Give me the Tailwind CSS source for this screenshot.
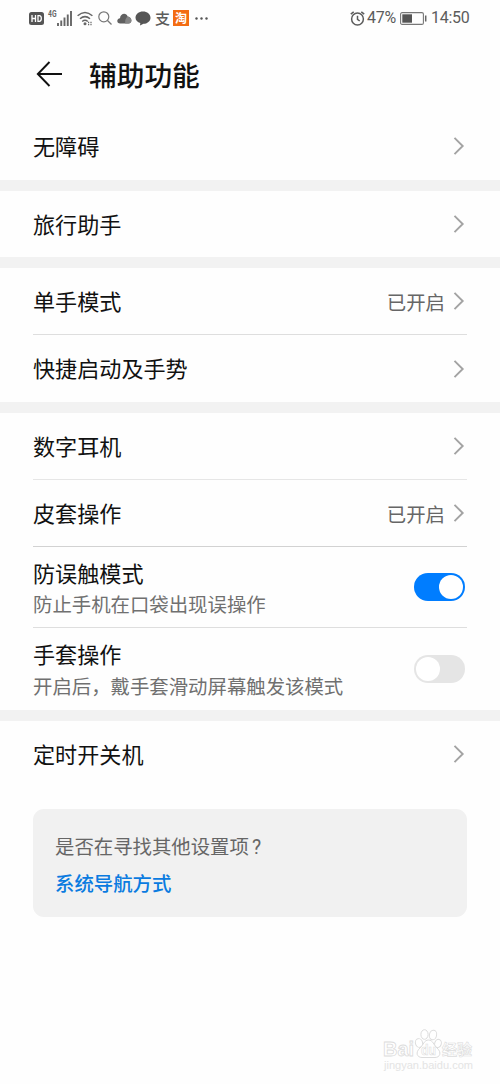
<!DOCTYPE html>
<html lang="zh-CN">
<head>
<meta charset="utf-8">
<title>辅助功能</title>
<script src="https://cdn.jsdelivr.net/npm/@tailwindcss/browser@4"></script>
</head>
<body class="w-[500px] h-[1084px] overflow-hidden bg-[#fefefe] text-[#111] font-['Noto_Sans_CJK_SC',sans-serif] flex flex-col">
<svg class="hidden"><symbol id="chev" viewBox="0 0 12 20"><path d="M1.500 1.800 9.700 10l-8.200 8.200" fill="none" stroke="#a3a3a3" stroke-width="1.900"/></symbol></svg>

<header class="h-9 shrink-0 flex items-center justify-between pl-[29px] pr-[30px] text-[#5c5c5c]">
  <div class="flex items-center">
    <svg class="w-[15px] h-[13px]" viewBox="0 0 15 13"><rect width="15" height="13" rx="2.500" fill="#555"/><path d="M3 3v7M6.500 3v7M3 6.500h3.500M9 3.700v5.600h1.300q2 0 2-2.800t-2-2.800z" fill="none" stroke="#fff" stroke-width="1.300"/></svg>
    <svg class="ml-[4px] mb-[9px] w-[9px] h-[9px] overflow-visible" viewBox="0 0 9 9"><text x="0" y="8" font-family="Roboto, sans-serif" font-size="9" font-weight="700" textLength="8.500" lengthAdjust="spacingAndGlyphs" fill="#666">4G</text></svg>
    <svg class="w-[15px] h-[15px]" viewBox="0 0 15 15"><path d="M1 12v3M4.250 9.500V15M7.500 6.500V15M10.750 3.500V15M14 0v15" stroke="#666" stroke-width="1.900"/></svg>
    <svg class="ml-[5px] w-4 h-[15px]" viewBox="0 0 16 15" fill="none" stroke="#666" stroke-width="1.500"><path d="M.6 4.800q7.400-6.600 14.800 0M3 7.800q5-4.400 10 0M5.200 10.500q2.800-2.400 5.600 0"/><circle cx="8" cy="12.800" r="1.500" fill="#666" stroke="none"/><path d="M11.600 10.800v3.500M14 10.800v3.500" stroke-width="1.200" stroke-dasharray="1.500 .6"/></svg>
    <svg class="ml-[5px] w-[14px] h-[14px]" viewBox="0 0 14 14" fill="none" stroke="#777" stroke-width="1.200"><circle cx="5.800" cy="5.800" r="5"/><path d="m9.500 9.500 4 4"/></svg>
    <svg class="ml-[5px] w-[15px] h-[11px]" viewBox="0 0 15 11"><path d="M3.200 10.500C-.8 10.500-.5 5.500 3 5.300 3.200.2 9.500-.8 10.600 3.500c4.800.5 5 7 .8 7z" fill="#606060"/><path d="M8.200 10.500c-.5-3.500 1-6.500 2.600-7 4.600.5 4.800 7 .6 7z" fill="#858585"/></svg>
    <svg class="ml-[3px] w-4 h-[15px]" viewBox="0 0 16 15"><path d="M8 .5c4.200 0 7.500 2.700 7.500 6.200S12.200 12.800 8.500 12.800L5 14.600l.3-2.500C2.500 11.300.5 9.300.5 6.700.5 3.200 3.800.5 8 .5z" fill="#555"/></svg>
    <span class="ml-[4px] mb-[2px] w-[15px] text-[15px] leading-[15px] font-medium">支</span>
    <span class="ml-[3px] w-4 h-4 bg-[#f36c13] text-white text-[12px] leading-[15px] font-bold text-center">淘</span>
    <svg class="ml-[6px] w-[13px] h-[3px]" viewBox="0 0 13 3" fill="#555"><circle cx="1.500" cy="1.500" r="1.200"/><circle cx="6.500" cy="1.500" r="1.200"/><circle cx="11.500" cy="1.500" r="1.200"/></svg>
  </div>
  <div class="flex items-center font-['Roboto',sans-serif] text-[16px] leading-5">
    <svg class="w-[15px] h-[15px]" viewBox="0 0 15 15" fill="none" stroke="#5c5c5c" stroke-width="1.500"><circle cx="7.500" cy="8" r="5.900"/><path d="M7.500 4.800v3.500l2.200 1.700M.8 3.200 3.700.8M14.200 3.200 11.300.8"/></svg>
    <span class="ml-[2px] w-[29px] tracking-[-0.2px]">47%</span>
    <svg class="ml-[4px] w-[27px] h-[13px]" viewBox="0 0 27 13"><rect x=".6" y=".6" width="22.800" height="11.800" rx="1.500" fill="none" stroke="#777" stroke-width="1.100"/><rect x="2.300" y="2.300" width="9.700" height="8.400" fill="#555"/><path d="M25.700 3.500v6" stroke="#666" stroke-width="1.500"/></svg>
    <span class="ml-[4px] w-[39px] tracking-[-0.3px]">14:50</span>
  </div>
</header>

<div class="h-[75px] mb-[2px] shrink-0 flex items-center pl-9">
  <svg class="w-[27px] h-[26px]" viewBox="0 0 27 26" fill="none" stroke="#111" stroke-width="1.900"><path d="M26 13H2M13.500 1 1.800 13l11.700 12"/></svg>
  <h1 class="ml-[26px] text-[27.700px] leading-10 font-medium">辅助功能</h1>
</div>

<main class="flex flex-col shrink-0 text-[22.100px] leading-8">
  <div class="h-[67px] px-[33px] flex items-center justify-between"><span class="pb-[3px]">无障碍</span><svg class="w-3 h-5 mr-[2px] mb-[2px]"><use href="#chev"/></svg></div>
  <div class="h-[11px] bg-[#f2f2f2]"></div>
  <div class="h-[66px] px-[33px] flex items-center justify-between"><span class="pb-[3px]">旅行助手</span><svg class="w-3 h-5 mr-[2px]"><use href="#chev"/></svg></div>
  <div class="h-[11px] bg-[#f2f2f2]"></div>
  <section class="px-[33px]">
    <div class="h-[67px] border-b border-[#dedede] flex items-center justify-between"><span class="pb-[2px]">单手模式</span><div class="flex items-center gap-2 mr-[2px]"><span class="pt-[2px] text-[19.400px] text-[#666]">已开启</span><svg class="w-3 h-5"><use href="#chev"/></svg></div></div>
    <div class="h-[67px] flex items-center justify-between"><span class="pb-[3px]">快捷启动及手势</span><svg class="w-3 h-5 mr-[2px]"><use href="#chev"/></svg></div>
  </section>
  <div class="h-[11px] bg-[#f2f2f2]"></div>
  <section class="px-[33px]">
    <div class="h-[67px] border-b border-[#e6e6e6] flex items-center justify-between"><span class="pb-[2px]">数字耳机</span><svg class="w-3 h-5 mr-[2px]"><use href="#chev"/></svg></div>
    <div class="h-[67px] border-b border-[#d2d2d2] flex items-center justify-between"><span class="pb-[2px]">皮套操作</span><div class="flex items-center gap-2 mr-[2px]"><span class="pt-[2px] text-[19.400px] text-[#666]">已开启</span><svg class="w-3 h-5"><use href="#chev"/></svg></div></div>
    <div class="h-[81px] border-b border-[#dedede] flex items-center justify-between">
      <div class="flex flex-col"><span class="leading-8">防误触模式</span><span class="pt-px text-[19.400px] leading-[30px] text-[#707070]">防止手机在口袋出现误操作</span></div>
      <div class="w-[51px] h-7 mr-[2px] p-[2px] rounded-full bg-[#007dff] flex justify-end"><div class="w-6 h-6 rounded-full bg-white"></div></div>
    </div>
    <div class="h-[82px] flex items-center justify-between">
      <div class="flex flex-col"><span class="h-8 leading-[30px]">手套操作</span><span class="pt-px text-[19.400px] leading-[30px] text-[#707070]">开启后，戴手套滑动屏幕触发该模式</span></div>
      <div class="w-[51px] h-7 mr-[2px] p-[2px] rounded-full bg-[#e5e5e5] flex"><div class="w-6 h-6 rounded-full bg-white"></div></div>
    </div>
  </section>
  <div class="h-[11px] bg-[#f2f2f2]"></div>
  <div class="h-[66px] px-[33px] flex items-center justify-between"><span class="pb-[2px]">定时开关机</span><svg class="w-3 h-5 mr-[2px]"><use href="#chev"/></svg></div>
  <aside class="mt-[22px] mx-[33px] h-[108px] rounded-[11px] bg-[#f1f1f1] pl-[22px] pt-[19px] text-[19.400px] flex flex-col">
    <span class="h-[37px] leading-9 text-[#666]">是否在寻找其他设置项<span class="font-['Roboto',sans-serif] ml-[3px]">?</span></span>
    <a class="leading-9 font-medium text-[#0a7be0]">系统导航方式</a>
  </aside>
</main>

<footer class="mt-[110px] ml-[383px] w-[92px] shrink-0 flex flex-col">
  <svg class="w-[92px] h-[33px]" viewBox="0 0 92 33" fill="#fff" stroke="#dcdcdc" stroke-width="1">
    <ellipse cx="36" cy="16" rx="3.600" ry="4.400" transform="rotate(-15 36 16)"/><ellipse cx="41.500" cy="7.500" rx="3.600" ry="4.800"/><ellipse cx="50" cy="8" rx="3.600" ry="4.800" transform="rotate(12 50 8)"/><ellipse cx="55" cy="16.500" rx="3.300" ry="4.200" transform="rotate(15 55 16.500)"/>
    <path d="M45.500 13c4.500 0 5 5 8.500 8 5 4.500 3 9.500-2 9.500H39c-5 0-7-5-2-9.500 3.500-3 4-8 8.500-8z"/>
    <g font-family="Liberation Sans, sans-serif" stroke-width=".8"><text x="0" y="29" font-size="20" font-weight="700" textLength="31" lengthAdjust="spacingAndGlyphs">Bai</text><text x="38" y="28" font-size="14" stroke-width=".6" font-weight="700" textLength="15" lengthAdjust="spacingAndGlyphs">du</text></g>
    <text x="59" y="28" font-family="Noto Sans CJK SC, sans-serif" font-weight="700" font-size="15" textLength="30" stroke-width=".6">经验</text>
  </svg>
  <svg class="w-[92px] h-[14px]" viewBox="0 0 92 14"><text x="1" y="9" font-family="Liberation Sans, sans-serif" font-size="11" textLength="89" lengthAdjust="spacingAndGlyphs" fill="#e4e4e4">jingyan.baidu.com</text></svg>
</footer>
</body>
</html>
